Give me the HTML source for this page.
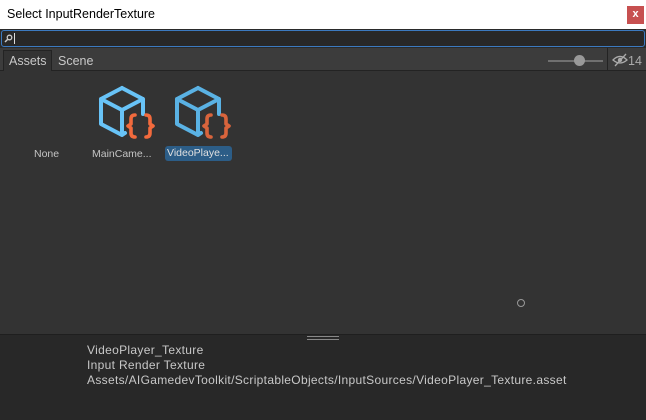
<!DOCTYPE html>
<html><head><style>
*{margin:0;padding:0;box-sizing:border-box}
body{width:646px;height:420px;overflow:hidden;background:#333;font-family:"Liberation Sans",sans-serif;position:relative}
.a{position:absolute}
</style></head><body>
<div class="a" style="left:0;top:0;width:646px;height:29px;background:#fff"></div>
<div class="a" style="left:7px;top:7px;font-size:12.5px;color:#000">Select InputRenderTexture</div>
<div class="a" style="left:627px;top:6px;width:17px;height:18px;background:#c75050;color:#fff;font-size:11px;font-weight:bold;text-align:center;line-height:17px">x</div>
<div class="a" style="left:0;top:29px;width:646px;height:19px;background:#2a2a2a"></div>
<div class="a" style="left:1px;top:30px;width:644px;height:17px;border:1px solid #3c7ac0;border-radius:3px;background:#282828"></div>
<svg class="a" style="left:4px;top:34px" width="9" height="9"><circle cx="5.5" cy="3.5" r="2.3" fill="none" stroke="#ccc" stroke-width="1.3"/><line x1="4" y1="5" x2="1" y2="8" stroke="#ccc" stroke-width="1.5"/></svg>
<div class="a" style="left:14px;top:33px;width:1px;height:11px;background:#ddd"></div>
<div class="a" style="left:0;top:48px;width:646px;height:23px;background:#3c3c3c;border-bottom:1px solid #232323"></div>
<div class="a" style="left:3px;top:50px;width:49px;height:21px;background:#333;border:1px solid #232323;border-bottom:none"></div>
<div class="a" style="left:9px;top:54px;font-size:12.5px;color:#c8c8c8">Assets</div>
<div class="a" style="left:58px;top:54px;font-size:12.5px;color:#c8c8c8">Scene</div>
<div class="a" style="left:548px;top:60px;width:55px;height:2px;background:#707070"></div>
<div class="a" style="left:574px;top:55px;width:11px;height:11px;border-radius:50%;background:#999"></div>
<div class="a" style="left:607px;top:48px;width:1px;height:23px;background:#232323"></div>
<svg class="a" style="left:612px;top:53px" width="16" height="14"><path d="M1 7 Q8 0 15 7 Q8 13 1 7Z" fill="none" stroke="#aaa" stroke-width="1.3"/><circle cx="8" cy="7" r="2.2" fill="#aaa"/><line x1="3" y1="13" x2="14" y2="1" stroke="#aaa" stroke-width="1.3"/></svg>
<div class="a" style="left:628px;top:54px;font-size:12.5px;color:#aaa">14</div>

<div class="a" style="left:34px;top:148px;font-size:10.5px;color:#c4c4c4">None</div>

<svg class="a" style="left:92px;top:82px" width="70" height="62">
<g fill="none" stroke="#68c3f7" stroke-width="4" stroke-linejoin="round" stroke-linecap="round">
<path d="M30 6 L51 17 L51 32 M51 17 L30 28 L9 17 L30 6 M9 17 L9 42 L30 53 L33 51 M30 28 L30 53"/></g>
<g fill="none" stroke="#f26a3d" stroke-width="3.6" stroke-linejoin="round" stroke-linecap="round">
<path d="M43 33 Q39 33 39 37 L39 42 L36 44 L39 46 L39 51 Q39 55 43 55"/>
<path d="M54 33 Q58 33 58 37 L58 42 L61 44 L58 46 L58 51 Q58 55 54 55"/></g></svg>
<div class="a" style="left:92px;top:148px;font-size:10.5px;color:#c4c4c4">MainCame...</div>

<svg class="a" style="left:168px;top:82px" width="70" height="62">
<g fill="none" stroke="#5ab2e4" stroke-width="4" stroke-linejoin="round" stroke-linecap="round">
<path d="M30 6 L51 17 L51 32 M51 17 L30 28 L9 17 L30 6 M9 17 L9 42 L30 53 L33 51 M30 28 L30 53"/></g>
<g fill="none" stroke="#d9643c" stroke-width="3.6" stroke-linejoin="round" stroke-linecap="round">
<path d="M43 33 Q39 33 39 37 L39 42 L36 44 L39 46 L39 51 Q39 55 43 55"/>
<path d="M54 33 Q58 33 58 37 L58 42 L61 44 L58 46 L58 51 Q58 55 54 55"/></g></svg>
<div class="a" style="left:165px;top:146px;width:67px;height:15px;background:#2c5d87;border-radius:3px;font-size:10.5px;color:#e0e0e0;line-height:15px;padding-left:2px">VideoPlaye...</div>

<div class="a" style="left:517px;top:299px;width:8px;height:8px;border:1px solid #999;border-radius:50%"></div>

<div class="a" style="left:0;top:334px;width:646px;height:86px;background:#282828;border-top:1px solid #1f1f1f"></div>
<div class="a" style="left:307px;top:336px;width:32px;height:1px;background:#888"></div>
<div class="a" style="left:307px;top:339px;width:32px;height:1px;background:#888"></div>
<div class="a" style="left:87px;top:343px;font-size:12px;letter-spacing:0.32px;color:#c8c8c8;line-height:15px">VideoPlayer_Texture<br>Input Render Texture<br>Assets/AIGamedevToolkit/ScriptableObjects/InputSources/VideoPlayer_Texture.asset</div>
</body></html>
